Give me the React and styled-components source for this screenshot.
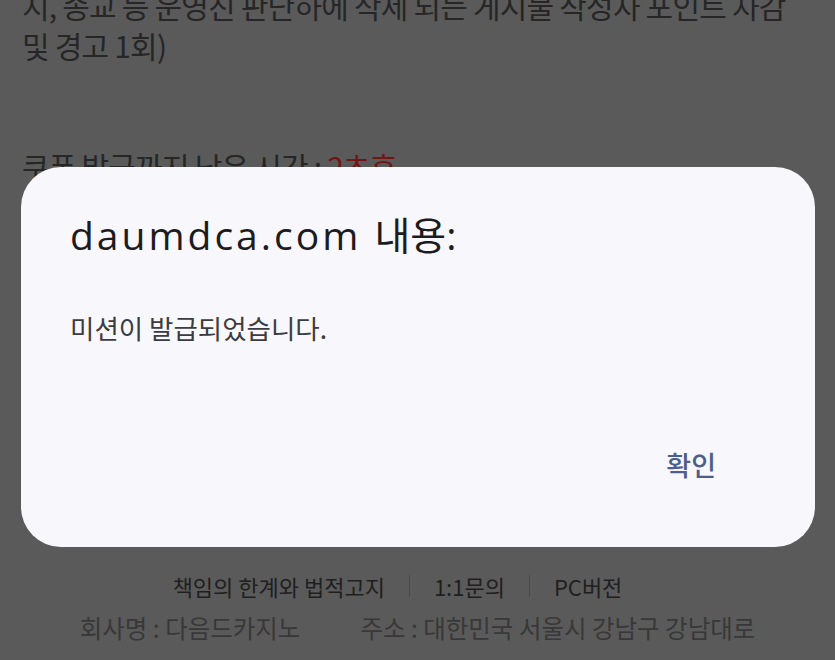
import React from 'react'
import styled, { createGlobalStyle } from 'styled-components'

const GlobalStyle = createGlobalStyle`
	html, body {
		margin: 0;
		padding: 0;
		background: #5a5a5a;
	}
	body {
		font-family: "Noto Sans CJK KR", "Noto Sans", sans-serif;
	}
`

const Page = styled.div`
	position: relative;
	width: 835px;
	height: 660px;
	overflow: hidden;
	background: #5a5a5a;
	display: flex;
	flex-direction: column;
`

const Notice = styled.div`
	margin-top: -15px;
	padding: 0 22px;
	font-size: 30px;
	line-height: 40px;
	letter-spacing: -0.8px;
	color: #262626;
`

const NoticeLine = styled.p`
	margin: 0;
	white-space: nowrap;
`

const Timer = styled.p`
	margin: 81px 0 0;
	padding: 0 22px;
	font-size: 30px;
	line-height: 40px;
	letter-spacing: -0.8px;
	color: #262626;
	white-space: nowrap;
`

const Red = styled.span`
	color: #741414;
`

const Footer = styled.footer`
	margin-top: auto;
	padding-bottom: 16px;
	display: flex;
	flex-direction: column;
	align-items: center;
`

const Links = styled.div`
	display: flex;
	align-items: center;
	padding-right: 40px;
	font-size: 22px;
	line-height: 30px;
	color: #1f1f1f;
`

const Divider = styled.span`
	width: 1px;
	height: 22px;
	margin: 0 24px;
	background: #4a4a4a;
`

const Company = styled.div`
	margin-top: 11px;
	display: flex;
	gap: 60px;
	font-size: 24.5px;
	line-height: 32px;
	color: #383838;
	white-space: nowrap;
`

const Dialog = styled.div`
	position: absolute;
	left: 21px;
	top: 167px;
	width: 794px;
	height: 380px;
	box-sizing: border-box;
	padding: 45px 49px 0;
	border-radius: 40px;
	background: #f8f7fc;
	display: flex;
	flex-direction: column;
`

const Title = styled.h1`
	margin: 0;
	font-family: "Open Sans", "Noto Sans CJK KR", sans-serif;
	font-weight: 400;
	font-size: 39px;
	line-height: 46px;
	letter-spacing: 3px;
	color: #1c1c1f;
	white-space: nowrap;
`

const TitleKo = styled.span`
	letter-spacing: 0;
`

const Message = styled.p`
	margin: 53px 0 0;
	font-size: 26.5px;
	line-height: 34px;
	color: #3c3c40;
	white-space: nowrap;
`

const Actions = styled.div`
	margin-top: 100px;
	display: flex;
	justify-content: flex-end;
	padding-right: 26px;
`

const Button = styled.button`
	border: 0;
	background: none;
	padding: 0 24px;
	font-family: "Noto Sans CJK KR", sans-serif;
	font-weight: 500;
	font-size: 27px;
	line-height: 40px;
	color: #4d5d8c;
	cursor: pointer;
`

const App = () => (
	<Page>
		<GlobalStyle />
		<Notice>
			<NoticeLine>지, 종교 등 운영진 판단하에 삭제 되는 게시물 작성자 포인트 차감</NoticeLine>
			<NoticeLine>및 경고 1회)</NoticeLine>
		</Notice>
		<Timer>
			쿠폰 발급까지 남은 시간 : <Red>2초후</Red>
		</Timer>
		<Footer>
			<Links>
				<span>책임의 한계와 법적고지</span>
				<Divider />
				<span>1:1문의</span>
				<Divider />
				<span>PC버전</span>
			</Links>
			<Company>
				<span>회사명 : 다음드카지노</span>
				<span>주소 : 대한민국 서울시 강남구 강남대로</span>
			</Company>
		</Footer>
		<Dialog>
			<Title>
				daumdca.com <TitleKo>내용:</TitleKo>
			</Title>
			<Message>미션이 발급되었습니다.</Message>
			<Actions>
				<Button>확인</Button>
			</Actions>
		</Dialog>
	</Page>
)

export default App
